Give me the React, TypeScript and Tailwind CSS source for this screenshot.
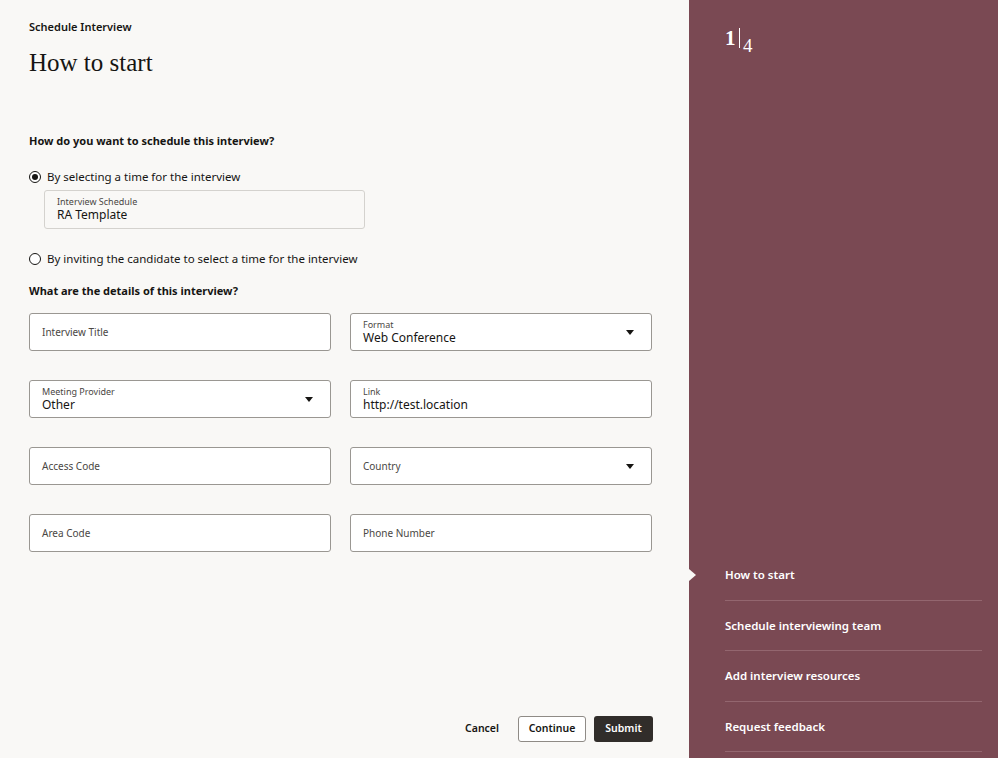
import React from "react";

const sans = { fontFamily: '"Noto Sans", "Open Sans", sans-serif' };

function Field({ label, value, select }: { label: string; value?: string; select?: boolean }) {
  return (
    <div className="relative h-[38px] border border-[#9a9792] rounded-[3px] bg-white px-3 flex flex-col justify-center">
      {value ? (
        <>
          <div className="text-[9px] leading-[10px] text-[#4a4744]">{label}</div>
          <div className="text-[12px] leading-[15px] text-[#161513]">{value}</div>
        </>
      ) : (
        <div className="text-[10px] text-[#4a4744]">{label}</div>
      )}
      {select && (
        <svg className="absolute right-[17px] top-[16px]" width="8" height="5" viewBox="0 0 8 5">
          <path d="M0 0h8L4 5z" fill="#161513" />
        </svg>
      )}
    </div>
  );
}

function Radio({ checked }: { checked?: boolean }) {
  return (
    <span className="w-[12px] h-[12px] rounded-full border border-[#161513] flex items-center justify-center bg-white">
      {checked && <span className="w-[6px] h-[6px] rounded-full bg-[#161513]" />}
    </span>
  );
}

export default function App() {
  return (
    <div className="flex w-[998px] h-[758px] overflow-hidden" style={sans}>
      <div className="w-[689px] bg-[#f9f8f6] pl-[29px] pr-[36px] flex flex-col relative">
        <div className="mt-[19px] text-[11px] font-semibold text-[#161513]">Schedule Interview</div>
        <div className="mt-[11px] text-[25px] leading-[32px] text-[#161513]" style={{ fontFamily: 'Georgia, "Liberation Serif", serif' }}>How to start</div>
        <div className="mt-[54px] text-[11px] font-bold text-[#161513]">How do you want to schedule this interview?</div>
        <div className="mt-[19px] flex items-center gap-[6px] text-[11.5px] text-[#161513]">
          <Radio checked /> By selecting a time for the interview
        </div>
        <div className="mt-[5px] ml-[15px] w-[321px] h-[39px] border border-[#d4d2ce] rounded-[3px] px-3 flex flex-col justify-center">
          <div className="text-[9px] leading-[10px] text-[#4a4744]">Interview Schedule</div>
          <div className="text-[12px] leading-[15px] text-[#161513]">RA Template</div>
        </div>
        <div className="mt-[21px] flex items-center gap-[6px] text-[11.5px] text-[#161513]">
          <Radio /> By inviting the candidate to select a time for the interview
        </div>
        <div className="mt-[15px] text-[11px] font-bold text-[#161513]">What are the details of this interview?</div>
        <div className="mt-[14px] grid grid-cols-[302px_302px] gap-x-[19px] gap-y-[29px]">
          <Field label="Interview Title" />
          <Field label="Format" value="Web Conference" select />
          <Field label="Meeting Provider" value="Other" select />
          <Field label="Link" value="http://test.location" />
          <Field label="Access Code" />
          <Field label="Country" select />
          <Field label="Area Code" />
          <Field label="Phone Number" />
        </div>
        <div className="mt-auto mb-[16px] flex justify-end items-center gap-[8px] text-[10.5px] font-semibold">
          <span className="mr-[11px] text-[#161513]">Cancel</span>
          <span className="h-[26px] w-[68px] border border-[#8f8b86] rounded-[3px] bg-white flex items-center justify-center text-[#161513]">Continue</span>
          <span className="h-[26px] w-[59px] rounded-[3px] bg-[#312d2a] text-white flex items-center justify-center">Submit</span>
        </div>
      </div>
      <div className="w-[309px] bg-[#7a4953] flex flex-col relative">
        <div className="mt-[26px] ml-[36px] flex items-start text-white" style={{ fontFamily: 'Georgia, "Liberation Serif", serif' }}>
          <span className="text-[21px] leading-[24px] font-semibold">1</span>
          <span className="w-[1.5px] h-[20px] bg-white mx-[3px] mt-[2px]" />
          <span className="text-[19px] leading-[20px] mt-[10px]">4</span>
        </div>
        <div className="mt-auto mb-[6px] ml-[36px] mr-[16px] text-white text-[11.5px] font-semibold">
          {["How to start", "Schedule interviewing team", "Add interview resources", "Request feedback"].map((t, i) => (
            <div key={t} className="relative h-[50.5px] flex items-center border-b border-[#93666f]">
              {i === 0 && (
                <span className="absolute left-[-36px] top-[19px] w-0 h-0 border-y-[6px] border-y-transparent border-l-[7px] border-l-[#f9f8f6]" />
              )}
              {t}
            </div>
          ))}
        </div>
      </div>
    </div>
  );
}
